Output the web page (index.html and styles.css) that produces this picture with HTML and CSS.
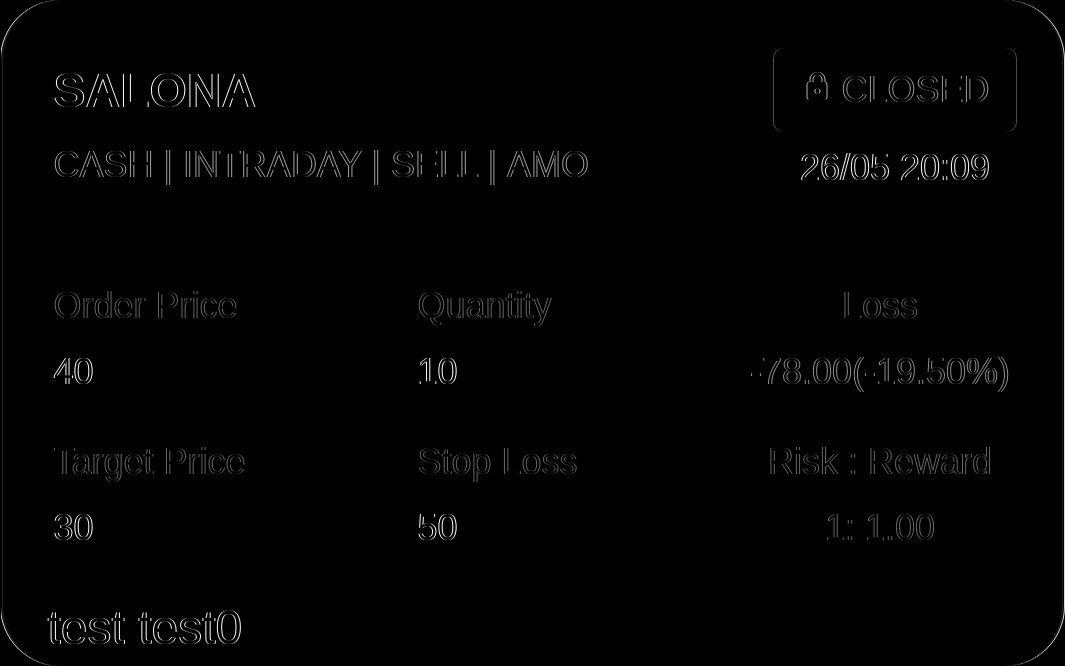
FILE: index.html
```html
<!DOCTYPE html>
<html lang="en">
<head>
<meta charset="utf-8">
<title>Order card</title>
<link rel="stylesheet" href="styles.css">
</head>
<body>
<svg class="defs" aria-hidden="true">
  <filter id="contour" x="0" y="0" width="100%" height="100%" color-interpolation-filters="sRGB">
    <feConvolveMatrix in="SourceGraphic" order="3 1" kernelMatrix="0 1 -1" divisor="1" targetX="1" targetY="0" edgeMode="duplicate" preserveAlpha="true" result="rise"/>
    <feConvolveMatrix in="SourceGraphic" order="3 1" kernelMatrix="0 -1 1" divisor="1" targetX="1" targetY="0" edgeMode="duplicate" preserveAlpha="true" result="fall"/>
    <feComposite in="rise" in2="fall" operator="arithmetic" k1="0" k2="1" k3="1" k4="0"/>
  </filter>
</svg>
<main class="page">
  <article class="card">
    <header class="head">
      <div class="instrument">
        <h1 class="symbol">SALONA</h1>
        <p class="tags">CASH | INTRADAY | SELL | <span class="tag">AMO</span></p>
      </div>
      <div class="state">
        <p class="badge">
          <svg class="lock" viewBox="0 0 24 30" aria-hidden="true">
            <path class="shackle" d="M6 12V8.500a6 6 0 0 1 12 0V12"/>
            <path class="body" fill-rule="evenodd" d="M4 11h15a2.500 2.500 0 0 1 2.500 2.500v12.500a2.500 2.500 0 0 1-2.500 2.500H4a2.500 2.500 0 0 1-2.500-2.500V13.500A2.500 2.500 0 0 1 4 11zM12 17.500a2.500 2.500 0 1 0 0 5 2.500 2.500 0 0 0 0-5z"/>
          </svg>
          <span>CLOSED</span>
        </p>
        <time class="time">26/05 20:09</time>
      </div>
    </header>
    <dl class="figures">
      <div class="figure"><dt>Order Price</dt><dd>40</dd></div>
      <div class="figure"><dt>Quantity</dt><dd>10</dd></div>
      <div class="figure centred"><dt>Loss</dt><dd class="loss">-78.00(-19.50%)</dd></div>
      <div class="figure"><dt>Target Price</dt><dd>30</dd></div>
      <div class="figure"><dt>Stop Loss</dt><dd>50</dd></div>
      <div class="figure centred"><dt>Risk : Reward</dt><dd class="ratio">1: 1.00</dd></div>
    </dl>
    <p class="note">test test0</p>
  </article>
</main>
</body>
</html>
```
FILE: styles.css
```css
* { box-sizing: border-box; }
body, h1, p, dl, dd { margin: 0; }
body {
  background: #000;
  font-family: "Liberation Sans", Arial, sans-serif;
  font-size: 36px;
  line-height: 42px;
}
.defs { position: absolute; width: 0; height: 0; }
.page {
  min-height: 100vh;
  display: flex;
  padding-right: 1px;
  background: #fff;
  filter: url(#contour);
}
.card {
  flex: 1;
  padding: 48px 46px 4px 51px;
  border: 2px solid #222;
  border-top: 0;
  border-bottom: 0;
  border-radius: 60px;
  background: #000;
  color: #fff;
}
.head { display: flex; justify-content: space-between; }
.symbol { margin-top: 16px; font-size: 48px; line-height: 54px; }
.tags { margin-top: 26px; color: #a4a4a4; }
.tag { display: inline-block; }
.state { display: flex; flex-direction: column; align-items: center; gap: 15px; }
.badge {
  display: flex;
  align-items: center;
  gap: 12px;
  height: 84px;
  padding: 0 27px 0 32px;
  border-radius: 10px;
  background: #4a4a4a;
  color: #e4e4e4;
}
.lock { width: 24px; height: 30px; margin-bottom: 8px; }
.shackle { fill: none; stroke: #fff; stroke-width: 3; }
.body { fill: #fff; }
.figures {
  display: grid;
  grid-template-columns: 364fr 326fr 273fr;
  row-gap: 48px;
  margin-top: 96px;
}
.figure { display: grid; row-gap: 24px; }
.centred { text-align: center; }
dt { color: #666; }
.loss { color: #909090; }
.ratio { color: #666; }
.note { margin: 52px 0 0 -6px; font-size: 48px; line-height: 54px; }
```
